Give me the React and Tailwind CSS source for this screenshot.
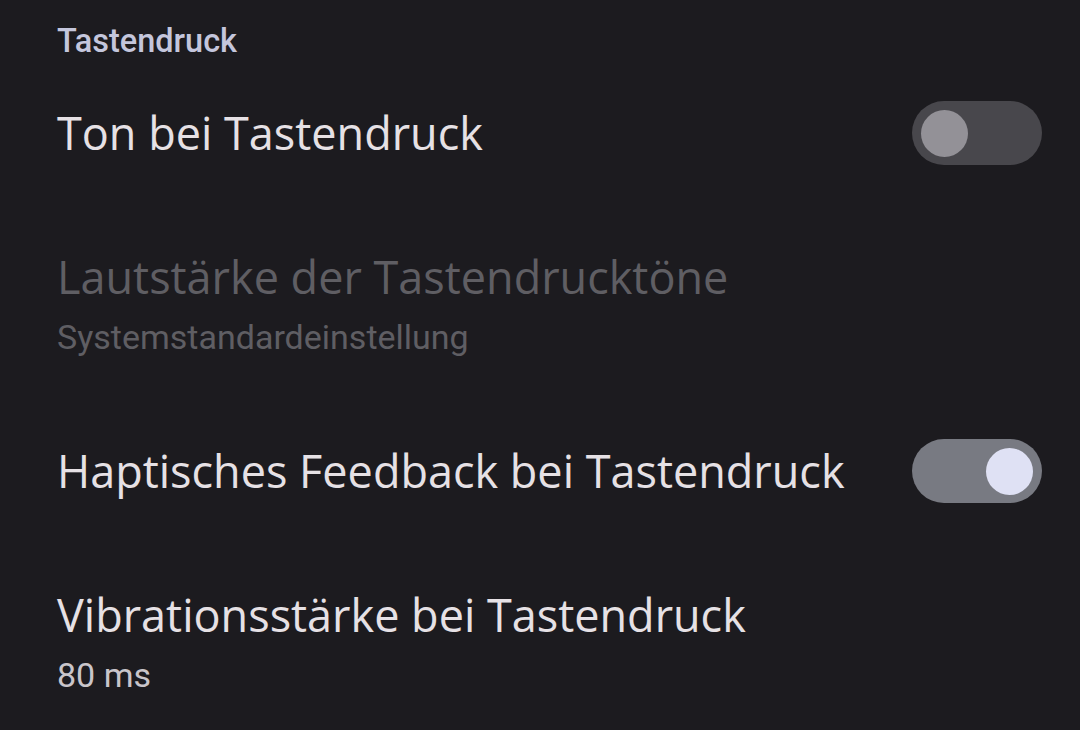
export default function App() {
  return (
    <div className="h-[730px] w-[1080px] overflow-hidden bg-[#1c1b1f] font-['Open_Sans',sans-serif]">
      <div className="h-[70px] pl-[57px] pt-[22px]">
        <h2 className="text-[32.5px] leading-[38px] font-medium text-[#c4c6dc] font-['Roboto',sans-serif]">Tastendruck</h2>
      </div>

      <div className="h-[126px] pl-[57px] pr-[38px] flex items-center justify-between">
        <span className="text-[45px] leading-[56px] text-[#e6e1e5]">Ton bei Tastendruck</span>
        <div className="w-[130px] h-[64px] rounded-full bg-[#48474c] flex items-center pl-[9px]">
          <div className="w-[47px] h-[47px] rounded-full bg-[#939197]" />
        </div>
      </div>

      <div className="h-[212px] pl-[57px] pr-[38px] pt-[53px] flex flex-col">
        <span className="text-[45px] leading-[56px] text-[#5f5e63]">Lautstärke der Tastendrucktöne</span>
        <span className="text-[34px] leading-[44px] mt-[10px] text-[#5f5e63] font-['Roboto',sans-serif]">Systemstandardeinstellung</span>
      </div>

      <div className="h-[126px] pl-[57px] pr-[38px] flex items-center justify-between">
        <span className="text-[45px] leading-[56px] text-[#e6e1e5]">Haptisches Feedback bei Tastendruck</span>
        <div className="w-[130px] h-[64px] rounded-full bg-[#787a82] flex items-center justify-end pr-[9px]">
          <div className="w-[47px] h-[47px] rounded-full bg-[#dfe1f4]" />
        </div>
      </div>

      <div className="h-[222px] pl-[57px] pr-[38px] pt-[53px] flex flex-col">
        <span className="text-[45px] leading-[56px] text-[#e6e1e5]">Vibrationsstärke bei Tastendruck</span>
        <span className="text-[34px] leading-[44px] mt-[10px] text-[#c9c5ca] font-['Roboto',sans-serif]">80 ms</span>
      </div>
    </div>
  );
}
